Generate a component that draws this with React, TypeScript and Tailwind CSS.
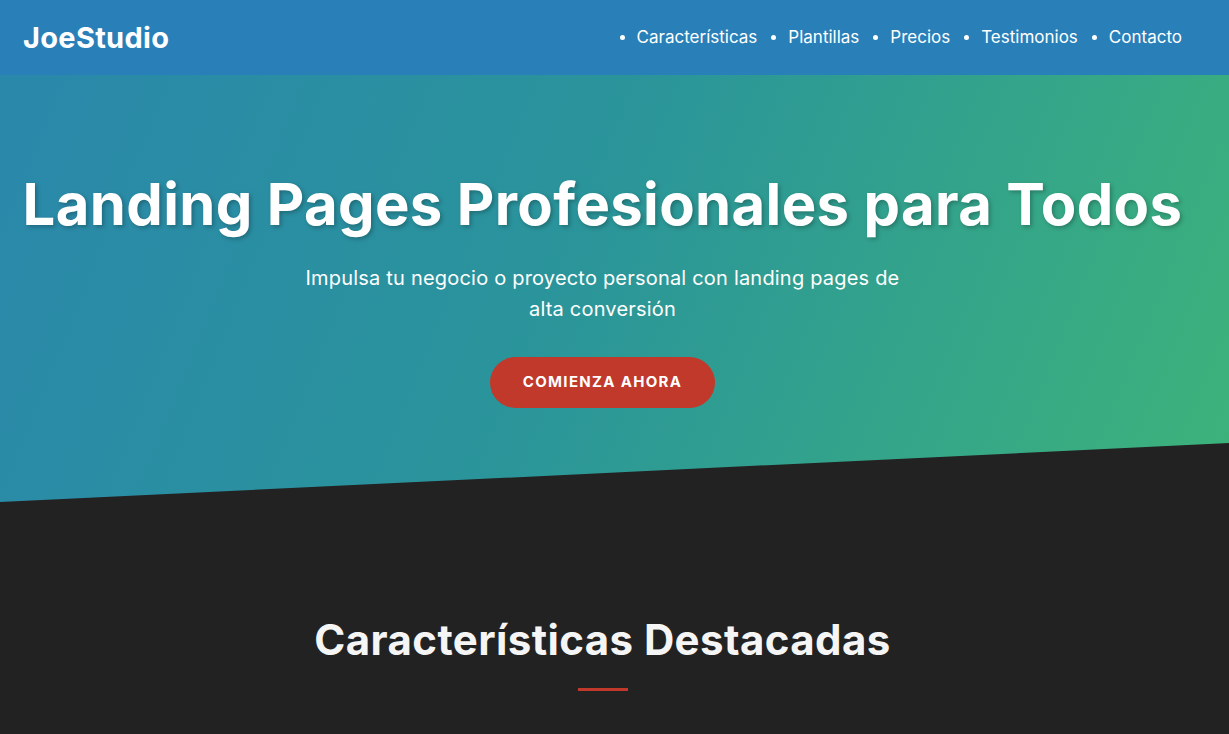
import React from "react";

const font = { fontFamily: "Inter, 'Noto Sans', sans-serif" };

export default function App() {
  const links = ["Características", "Plantillas", "Precios", "Testimonios", "Contacto"];
  return (
    <div className="min-h-[734px] bg-[#222222] text-white" style={font}>
      <header className="h-[75px] bg-[#2980b9]">
        <div className="w-[1205px] h-full flex items-center justify-between px-[23px]">
          <div className="text-[29px] font-bold tracking-[0.3px] leading-none">JoeStudio</div>
          <nav>
            <ul className="flex items-center">
              {links.map((l) => (
                <li key={l} className="flex items-center ml-[14px]">
                  <span className="w-[5px] h-[5px] rounded-full bg-white mr-[12px]" />
                  <span className="text-[17px] leading-none">{l}</span>
                </li>
              ))}
            </ul>
          </nav>
        </div>
      </header>
      <section className="h-[427px] bg-[linear-gradient(112deg,#2a88ab_0%,#2a949b_45%,#3db37a_100%)] [clip-path:polygon(0_0,100%_0,100%_86.2%,0_100%)]">
        <div className="w-[1205px] flex flex-col items-center pt-[94px]">
          <h1 className="text-[58px] font-bold leading-[70px] tracking-[0.35px] [text-shadow:2px_2px_4px_rgba(0,0,0,0.25)] text-center whitespace-nowrap">
            Landing Pages Profesionales para Todos
          </h1>
          <p className="mt-[24px] max-w-[600px] text-center text-[20px] tracking-[0.2px] leading-[30.5px]">
            Impulsa tu negocio o proyecto personal con landing pages de alta conversión
          </p>
          <button className="mt-[33px] h-[51px] w-[225px] rounded-full bg-[#c0392b] text-[15px] font-bold uppercase tracking-[1.3px]">
            Comienza ahora
          </button>
        </div>
      </section>
      <section className="w-[1205px] flex flex-col items-center pt-[114px]">
        <h2 className="text-[42px] font-bold leading-[48px] tracking-[0.4px] text-[#f5f5f5]">Características Destacadas</h2>
        <div className="mt-[24px] w-[50px] h-[3px] bg-[#c0392b]" />
      </section>
    </div>
  );
}
